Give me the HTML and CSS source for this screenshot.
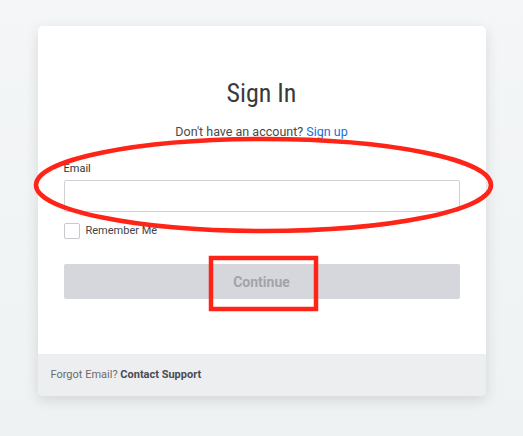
FILE: index.html
```html
<!DOCTYPE html>
<html lang="en">

<head>
    <meta charset="UTF-8">
    <meta name="viewport" content="width=device-width, initial-scale=1.0">
    <title>Sign In</title>
    <link rel="stylesheet" href="styles.css">
</head>

<body>
    <div class="page">
        <div class="card">
            <div class="card-body">
                <h1>Sign In</h1>
                <p class="signup">Don't have an account? <a href="#">Sign up</a></p>
                <form class="signin-form">
                    <label for="email">Email</label>
                    <input type="email" id="email" name="email">

                    <div class="remember">
                        <input type="checkbox" id="remember" name="remember">
                        <label for="remember">Remember Me</label>
                    </div>

                    <button type="submit" disabled>Continue</button>
                </form>
            </div>
            <div class="card-footer">
                Forgot Email? <a href="#">Contact Support</a>
            </div>
        </div>

        <!-- review markup drawn over the form -->
        <svg class="marks" width="523" height="436" viewBox="0 0 523 436">
            <ellipse cx="263.5" cy="185" rx="227.5" ry="46" fill="none" stroke="#ff2418" stroke-width="4.5"/>
            <rect x="211" y="258" width="105" height="51" fill="none" stroke="#ff2418" stroke-width="4.5"/>
        </svg>
    </div>
</body>

</html>
```

FILE: styles.css
```css
html, body {
    margin: 0;
    padding: 0;
}

body {
    font-family: Roboto, 'Noto Sans', sans-serif;
    background: linear-gradient(to bottom, #f4f6f7, #eef2f2);
    color: #333;
    height: 436px;
    overflow: hidden;
}

.page {
    position: relative;
    width: 523px;
    height: 436px;
    padding-top: 26px;
    box-sizing: border-box;
}

.card {
    width: 448px;
    margin: 0 auto;
    background: #fff;
    border-radius: 5px;
    box-shadow: 0 4px 14px rgba(0, 0, 0, 0.12);
    overflow: hidden;
}

.card-body {
    padding: 50px 26px 55px;
}

h1 {
    margin: 0;
    text-align: center;
    font-size: 26px;
    font-weight: 400;
    font-stretch: 80%;
    line-height: 34px;
    color: #3a3a3a;
}

.signup {
    margin: 14px 0 22px;
    text-align: center;
    font-size: 12.5px;
    line-height: 16px;
    color: #4a4a4a;
}

.signup a {
    color: #1a6fd6;
    text-decoration: none;
}

.signin-form label {
    display: block;
    font-size: 11px;
    line-height: 14px;
    color: #333;
    margin-bottom: 4px;
}

.signin-form input[type="email"] {
    display: block;
    width: 100%;
    height: 32px;
    box-sizing: border-box;
    border: 1px solid #cfd0d6;
    border-radius: 2px;
    margin: 0 0 11px;
    padding: 0 8px;
    font-size: 12px;
}

.remember {
    display: flex;
    align-items: center;
    gap: 6px;
}

.remember input[type="checkbox"] {
    appearance: none;
    width: 16px;
    height: 16px;
    margin: 0;
    border: 1px solid #c8c9ce;
    border-radius: 2px;
    background: #fff;
}

.remember label {
    margin: 0;
    color: #444;
}

button {
    display: block;
    width: 100%;
    height: 35px;
    margin-top: 25px;
    border: none;
    border-radius: 2px;
    background: #d6d7dc;
    color: #a2a3a9;
    font-family: Roboto, sans-serif;
    font-size: 14px;
    font-weight: bold;
}

.card-footer {
    background: #edeef0;
    padding: 13px 13px 14px;
    font-size: 11px;
    line-height: 15px;
    color: #6a6a70;
}

.card-footer a {
    color: #4a4a55;
    font-weight: bold;
    text-decoration: none;
}

.marks {
    position: absolute;
    left: 0;
    top: 0;
    pointer-events: none;
}
```
